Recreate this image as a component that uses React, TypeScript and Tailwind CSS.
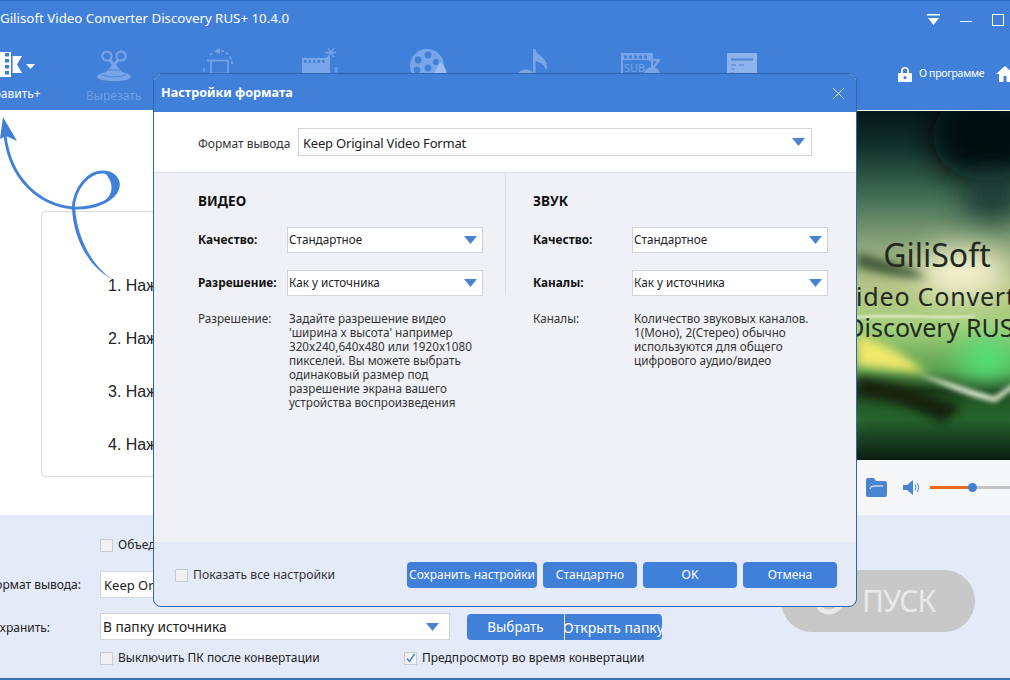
import React from "react";

const Caret = ({ className = "" }: { className?: string }) => (
  <svg width="13" height="8" viewBox="0 0 13 8" className={className}>
    <path d="M0 0H13L6.5 8Z" fill="#4a84d0" />
  </svg>
);

const Select = ({ text, className = "", textClass = "text-[11.7px] pl-[1px]" }: { text: string; className?: string; textClass?: string }) => (
  <div className={`flex items-center justify-between border border-[#d0d3d8] bg-white pr-[5px] ${className}`}>
    <span className={`whitespace-nowrap text-[#222] ${textClass}`}>{text}</span>
    <Caret />
  </div>
);

const Check = ({ checked = false }: { checked?: boolean }) => (
  <span className="flex h-[13px] w-[13px] shrink-0 items-center justify-center border border-[#c9cbd0] bg-[#f1f1f1]">
    {checked && (
      <svg width="11" height="11" viewBox="0 0 11 11">
        <path d="M2 5.5L4.5 8.5L9.5 1" stroke="#4a84d0" strokeWidth="1.5" fill="none" />
      </svg>
    )}
  </span>
);

const Tool = ({ label, children, dim = true }: { label?: string; children: React.ReactNode; dim?: boolean }) => (
  <div className="flex h-[55px] w-[104.5px] shrink-0 flex-col items-center">
    <div className="flex h-[38px] items-start justify-center">{children}</div>
    {label && <span className={`mt-[3px] whitespace-nowrap text-[12px] leading-[18px] ${dim ? "text-[#6f9fe4]" : "text-white"}`}>{label}</span>}
  </div>
);

const ic = "#78a5e8";
const bg = "#4080d9";

const Toolbar = () => (
  <div className="ml-[-43px] mt-[10px] flex">
    <Tool label="Добавить+" dim={false}>
      <svg width="62" height="34" viewBox="0 0 62 34">
        <rect x="8" y="4" width="25" height="25" fill="#fff" />
        <path d="M33 8H44L39 16.5L44 25H33Z" fill="#fff" />
        {[5, 11, 17, 23].map((y) => (
          <rect key={y} x="27" y={y} width="4" height="3.5" fill={bg} />
        ))}
        <rect x="33" y="8" width="1.6" height="17" fill={bg} />
        <path d="M48 16H57L52.5 21Z" fill="#fff" />
      </svg>
    </Tool>
    <Tool label="Вырезать">
      <svg width="36" height="36" viewBox="0 0 36 36">
        <circle cx="11" cy="8" r="4.6" fill="none" stroke={ic} strokeWidth="2" />
        <circle cx="25" cy="8" r="4.6" fill="none" stroke={ic} strokeWidth="2" />
        <path d="M14 12L23 24M22 12L13 24" stroke={ic} strokeWidth="3" />
        <path d="M18 15L26 24C31 25 35 27 35 29C33 32 27 33 18 33C9 33 3 32 1 29C1 27 5 25 10 24Z" fill={ic} />
        <path d="M6 27Q18 31 30 27" stroke={bg} strokeWidth="0.9" fill="none" />
        <path d="M12 22H24" stroke={bg} strokeWidth="1" />
      </svg>
    </Tool>
    <Tool>
      <svg width="34" height="28" viewBox="0 0 34 28">
        <rect x="10" y="12.5" width="17" height="13" fill="none" stroke={ic} strokeWidth="1.6" />
        <path d="M7 25.6H31M13 12.5H6" stroke={ic} strokeWidth="1.4" />
        <path d="M13 3L19 0V6Z" fill={ic} />
        <path d="M20 3H23M25 4.5L27 6.5M28.5 8.5L30 11M31 13V16" stroke={ic} strokeWidth="1.6" fill="none" />
        <path d="M3 20V24M9 7L11 5" stroke={ic} strokeWidth="1.4" />
      </svg>
    </Tool>
    <Tool>
      <svg width="40" height="28" viewBox="0 0 40 28" className="mr-[5px]">
        <path d="M2 10H25L30 8V28H2Z" fill={ic} />
        <g fill={bg}>
          {[4, 8.5, 13, 17.5, 22].map((x) => (
            <rect key={x} x={x} y="12" width="2.6" height="2.8" />
          ))}
        </g>
        <path d="M28 0L34 9M34 0L28 9M25 4.5H36" stroke={ic} strokeWidth="1.3" />
        <path d="M34 20L38 24M38 20L34 24M36 19V25" stroke={ic} strokeWidth="1" />
      </svg>
    </Tool>
    <Tool>
      <svg width="42" height="28" viewBox="0 0 42 28" className="ml-[2px]">
        <circle cx="20" cy="18" r="17" fill={ic} />
        <g fill={bg}>
          <circle cx="21" cy="7" r="3.4" />
          <circle cx="11" cy="12" r="3.4" />
          <circle cx="29" cy="14" r="3" />
          <circle cx="10" cy="22" r="3.4" />
          <circle cx="21" cy="20" r="3.4" />
        </g>
        <path d="M26 28L33 14C37 17 40 22 40 28Z" fill="#9dbeee" />
      </svg>
    </Tool>
    <Tool>
      <svg width="34" height="28" viewBox="0 0 34 28" className="ml-[2px]">
        <path d="M17 1H19.5V26H17Z" fill={ic} />
        <path d="M19 1C20 7 31 9 31 19C31 20 31 21 30 22C29 17 24 14 19 13Z" fill={ic} />
        <ellipse cx="10" cy="27" rx="8" ry="5.5" fill={ic} />
      </svg>
    </Tool>
    <Tool>
      <svg width="44" height="28" viewBox="0 0 44 28" className="ml-[4px]">
        <rect x="6" y="6" width="30" height="22" fill="none" stroke={ic} strokeWidth="2" />
        <rect x="6" y="6" width="30" height="6" fill={ic} />
        <g fill={bg}>
          {[8, 13, 18, 23, 28].map((x) => (
            <rect key={x} x={x} y="7.5" width="3" height="3" />
          ))}
        </g>
        <text x="8" y="24" fontSize="11" fill={ic} fontFamily="Noto Sans">SUB</text>
        <circle cx="36" cy="27" r="8" fill={ic} />
        <path d="M33 12H43L37 20" fill="none" stroke={ic} strokeWidth="2.4" />
      </svg>
    </Tool>
    <Tool>
      <svg width="36" height="28" viewBox="0 0 36 28" className="ml-[2px]">
        <rect x="3" y="5" width="30" height="23" fill="#8db2ec" />
        <path d="M7 11.5H29" stroke="#4f86d8" strokeWidth="2" />
        <path d="M7 17H12M15 17H20M7 21H11M7 25H10" stroke="#4f86d8" strokeWidth="1.2" />
      </svg>
    </Tool>
  </div>
);

const Header = () => (
  <header className="relative h-[110px] shrink-0 border-t border-[#2f69bd] bg-[#4080d9] text-white">
    <div className="flex h-[37px] items-center justify-between">
      <span className="mb-[1px] whitespace-nowrap text-[13.3px]">Gilisoft Video Converter Discovery RUS+ 10.4.0</span>
      <div className="mr-[6px] flex items-center gap-[20px]">
        <svg width="13" height="11" viewBox="0 0 13 11"><path d="M0 0H13V1.5H0ZM1 4H12L6.5 11Z" fill="#fff" /></svg>
        <span className="mt-[4px] h-[1.5px] w-[12px] bg-white" />
        <span className="h-[12px] w-[12px] border-[1.5px] border-white" />
      </div>
    </div>
    <Toolbar />
    <div className="absolute left-[898px] top-[65px] flex items-center whitespace-nowrap">
      <svg width="14" height="16" viewBox="0 0 14 16">
        <path d="M3 7V5C3 -0.5 11 -0.5 11 5V7H9.2V5C9.2 1.8 4.8 1.8 4.8 5V7Z" fill="#fff" />
        <path fillRule="evenodd" d="M1 7H13Q14 7 14 8V15Q14 16 13 16H1Q0 16 0 15V8Q0 7 1 7ZM7 10A1.6 1.6 0 1 0 7 13.2A1.6 1.6 0 1 0 7 10Z" fill="#fff" />
      </svg>
      <span className="ml-[7px] w-[70px] text-[10.5px] tracking-[-0.3px]">О программе</span>
      <svg width="18" height="16" viewBox="0 0 18 16" className="ml-[7px] shrink-0">
        <path d="M9 0L18 8H15V16H3V8H0Z" fill="#fff" />
        <rect x="7.5" y="10" width="3" height="6" fill="#4080d9" />
      </svg>
    </div>
  </header>
);

const Preview = () => (
  <div className="relative ml-[857px] mt-[1px] h-[349px] w-[160px] shrink-0 overflow-hidden bg-[#07140f]">
    <svg width="160" height="350" viewBox="0 0 160 350" className="absolute left-0 top-0">
      <defs>
        <linearGradient id="pg" x1="0" y1="0" x2="0" y2="1">
          <stop offset="0" stopColor="#07171a" />
          <stop offset="0.1" stopColor="#10302a" />
          <stop offset="0.24" stopColor="#3f6c52" />
          <stop offset="0.38" stopColor="#8aa47a" />
          <stop offset="0.5" stopColor="#b6c486" />
          <stop offset="0.62" stopColor="#a4d07c" />
          <stop offset="0.74" stopColor="#5aa050" />
          <stop offset="0.8" stopColor="#1d3d1c" />
          <stop offset="0.88" stopColor="#2e7a34" />
          <stop offset="1" stopColor="#0a1a12" />
        </linearGradient>
        <filter id="b1" x="-80%" y="-80%" width="260%" height="260%"><feGaussianBlur stdDeviation="14" /></filter>
        <filter id="b2" x="-50%" y="-100%" width="200%" height="300%"><feGaussianBlur stdDeviation="5" /></filter>
        <filter id="b4" x="-50%" y="-100%" width="200%" height="300%"><feGaussianBlur stdDeviation="2.5" /></filter>
        <filter id="b3" x="-20%" y="-500%" width="140%" height="1100%"><feGaussianBlur stdDeviation="1" /></filter>
      </defs>
      <rect width="160" height="350" fill="url(#pg)" />
      <ellipse cx="130" cy="25" rx="55" ry="45" fill="#04070b" filter="url(#b1)" />
      <ellipse cx="135" cy="85" rx="30" ry="25" fill="#1c3a34" filter="url(#b1)" />
      <ellipse cx="105" cy="162" rx="45" ry="24" fill="#f4f2d0" filter="url(#b1)" />
      <path d="M0 142L55 158L70 168L30 163L0 156Z" fill="#3a5434" filter="url(#b2)" />
      <ellipse cx="130" cy="248" rx="30" ry="20" fill="#50e67a" filter="url(#b1)" />
      <path d="M0 225C25 230 50 245 70 262L0 255Z" fill="#efe86a" filter="url(#b2)" />
      <path d="M0 266C35 270 70 282 105 296L85 312C60 298 30 288 0 284Z" fill="#12240f" filter="url(#b2)" />
      <path d="M0 300H160V350H0Z" fill="#0a1a12" opacity="0.25" filter="url(#b2)" />
      <path d="M60 262C88 270 115 279 137 286L160 270V275L138 291C110 285 85 274 60 262Z" fill="#eef9de" filter="url(#b4)" />
      <path d="M0 206C40 203 90 208 118 205" stroke="#f6fbe8" strokeWidth="1.6" fill="none" filter="url(#b3)" />
    </svg>
    <div className="relative flex h-full flex-col items-center whitespace-nowrap text-[#232a20]">
      <span className="mt-[124px] text-[32px] leading-[40px]">GiliSoft</span>
      <span className="ml-[8px] mt-[7px] text-[25px] leading-[28px] tracking-[0.8px]">Video Converter</span>
      <span className="mt-[3px] text-[25px] leading-[28px]">Discovery RUS+</span>
    </div>
  </div>
);

const Transport = () => (
  <div className="ml-[857px] flex h-[55px] shrink-0 items-center bg-[#f6f7f9] pl-[9px]">
    <svg width="21" height="19" viewBox="0 0 21 19">
      <path d="M0 2Q0 0 2 0H8L10 3H19Q21 3 21 5V17Q21 19 19 19H2Q0 19 0 17Z" fill="#4a84d0" />
      <path d="M4 11Q4 8 8 8H17" stroke="#fff" strokeWidth="1" fill="none" />
    </svg>
    <svg width="18" height="15" viewBox="0 0 18 15" className="ml-[16px]">
      <path d="M0 5H4L10 0V15L4 10H0Z" fill="#4a84d0" />
      <path d="M12 4.5Q14 7.5 12 10.5M14.5 3Q17 7.5 14.5 12" stroke="#4a84d0" strokeWidth="1" fill="none" />
    </svg>
    <div className="ml-[9px] flex flex-1 items-center">
      <div className="h-[3px] w-[42px] bg-[#e7691c]" />
      <div className="ml-[-4px] h-[9px] w-[9px] shrink-0 rounded-full bg-[#4080d9]" />
      <div className="h-[3px] flex-1 bg-[#c4c4c4]" />
    </div>
  </div>
);

const Steps = () => (
  <div className="ml-[41px] mt-[101px] flex h-[266px] w-[700px] flex-col gap-[33px] rounded-[4px] border border-[#dcdcdc] pl-[66px] pt-[64px] font-['Liberation_Sans',sans-serif] text-[16px] leading-[20px] text-[#222]">
    <span>1. Нажмите</span>
    <span>2. Нажмите</span>
    <span>3. Нажмите</span>
    <span>4. Нажмите</span>
  </div>
);

const Bottom = () => (
  <div className="flex-1 border-b-[2px] border-[#3a6fb8] bg-[#e4eaf7] text-[12px] text-[#222]">
    <div className="ml-[100px] mt-[23px] flex h-[14px] items-center gap-[5px]">
      <Check />
      <span className="whitespace-nowrap">Объединить в один файл</span>
    </div>
    <div className="mt-[19px] flex h-[27px] items-center">
      <div className="mt-[1px] flex w-[81px] shrink-0 justify-end whitespace-nowrap">Формат вывода:</div>
      <div className="ml-[19px] flex h-full w-[350px] items-center border border-[#d5d8de] bg-white pl-[3px] pt-[2px] text-[13px]">Keep Original</div>
    </div>
    <div className="mt-[15px] flex h-[27px] items-center">
      <div className="mt-[2px] flex w-[50px] shrink-0 justify-end whitespace-nowrap">Сохранить:</div>
      <Select text="В папку источника" className="ml-[50px] h-full w-[350px] pr-[10px]" textClass="text-[13.7px] pl-[2px] pt-[1px]" />
      <div className="ml-[17px] flex h-[26px] w-[97px] items-center justify-center rounded-l-[4px] bg-[#4080d9] pt-[1px] text-[13.5px] text-white">Выбрать</div>
      <div className="ml-[1px] flex h-[26px] w-[97px] items-center justify-center overflow-hidden whitespace-nowrap rounded-r-[4px] bg-[#4080d9] pt-[1px] text-[14px] text-white">Открыть папку</div>
    </div>
    <div className="ml-[100px] mt-[11px] flex h-[14px] items-center">
      <Check />
      <span className="ml-[5px] w-[286px] whitespace-nowrap">Выключить ПК после конвертации</span>
      <Check checked />
      <span className="ml-[5px] whitespace-nowrap">Предпросмотр во время конвертации</span>
    </div>
  </div>
);

const StartButton = () => (
  <div className="absolute left-[781px] top-[570px] flex h-[62px] w-[194px] items-center rounded-full bg-[#c8c8c8] pl-[33px] text-[#e9e9e9]">
    <svg width="30" height="30" viewBox="0 0 30 30">
      <path d="M3 13A12 12 0 0 0 27 15" stroke="#e9e9e9" strokeWidth="5" fill="none" />
      <path d="M26 15A11 11 0 0 0 6 9" stroke="#e9e9e9" strokeWidth="5" fill="none" />
    </svg>
    <span className="ml-[18px] text-[30px] leading-none tracking-[-1px]">ПУСК</span>
  </div>
);

const Row = ({ label, value, labelW }: { label: string; value: string; labelW: string }) => (
  <div className="flex h-[26px] items-center">
    <span className={`shrink-0 whitespace-nowrap text-[11.8px] font-bold text-[#111] ${labelW}`}>{label}</span>
    <Select text={value} className="h-full w-[196px]" />
  </div>
);

const Column = ({ title, rows, label, desc, className = "", labelW, descW }: { title: string; rows: [string, string][]; label: string; desc: string[]; className?: string; labelW: string; descW: string }) => (
  <div className={`flex flex-col ${className}`}>
    <div className="mt-[20px] h-[16px] text-[13.5px] font-bold leading-[16px] text-[#111]">{title}</div>
    <div className="mt-[18px] flex flex-col gap-[17px]">
      {rows.map(([a, b]) => (
        <Row key={a} label={a} value={b} labelW={labelW} />
      ))}
    </div>
    <div className="mt-[15px] flex text-[11.7px] leading-[14px] text-[#333]">
      <span className={`shrink-0 ${descW}`}>{label}</span>
      <div className="whitespace-nowrap">
        {desc.map((l) => (
          <div key={l}>{l}</div>
        ))}
      </div>
    </div>
  </div>
);

const Btn = ({ children, w }: { children: React.ReactNode; w: string }) => (
  <div className={`flex h-[26px] items-center justify-center whitespace-nowrap rounded-[4px] bg-[#4080d9] text-[12px] text-white ${w}`}>{children}</div>
);

const Modal = () => (
  <div className="absolute left-[153px] top-[73px] flex h-[534px] w-[704px] flex-col overflow-hidden rounded-[8px] border border-[#2f66ad] bg-[#e4eaf7]">
    <div className="flex h-[38px] shrink-0 items-center justify-between bg-[#4080d9] pl-[7px] pr-[11px] text-white">
      <span className="text-[12.6px] font-bold">Настройки формата</span>
      <svg width="13" height="13" viewBox="0 0 13 13"><path d="M1 1L12 12M12 1L1 12" stroke="#fff" strokeWidth="0.9" /></svg>
    </div>
    <div className="flex h-[61px] shrink-0 items-center border-b border-[#dcdfe4] bg-white pl-[44px]">
      <span className="mt-[3px] w-[100px] whitespace-nowrap text-[12px] text-[#333]">Формат вывода</span>
      <Select text="Keep Original Video Format" className="h-[28px] w-[514px] pr-[6px]" textClass="text-[13px] tracking-[-0.2px] pl-[4px] pt-[3px]" />
    </div>
    <div className="flex h-[369px] shrink-0 bg-[#eff1f6]">
      <Column className="ml-[44px] h-[122px] w-[308px] self-start border-r border-[#dcdfe4]" labelW="w-[89px]" descW="w-[91px]" title="ВИДЕО" label="Разрешение:" rows={[["Качество:", "Стандартное"], ["Разрешение:", "Как у источника"]]} desc={["Задайте разрешение видео", "'ширина x высота' например", "320x240,640x480 или 1920x1080", "пикселей. Вы можете выбрать", "одинаковый размер под", "разрешение экрана вашего", "устройства воспроизведения"]} />
      <Column className="ml-[27px]" labelW="w-[99px]" descW="w-[101px]" title="ЗВУК" label="Каналы:" rows={[["Качество:", "Стандартное"], ["Каналы:", "Как у источника"]]} desc={["Количество звуковых каналов.", "1(Моно), 2(Стерео) обычно", "используются для общего", "цифрового аудио/видео"]} />
    </div>
    <div className="flex flex-1 items-center pl-[21px] pt-[2px]">
      <Check />
      <span className="ml-[5px] w-[214px] whitespace-nowrap text-[12.2px] text-[#333]">Показать все настройки</span>
      <div className="flex gap-[6px]">
        <Btn w="w-[130px]">Сохранить настройки</Btn>
        <Btn w="w-[94px]">Стандартно</Btn>
        <Btn w="w-[94px]">OK</Btn>
        <Btn w="w-[94px]">Отмена</Btn>
      </div>
    </div>
  </div>
);

const Swirl = () => (
  <svg width="130" height="180" viewBox="0 0 130 180" className="absolute left-0 top-[110px]">
    <path d="M112 169C90 158 73 130 72 97L75 97C77 128 92 156 112 169Z" fill="#4080d9" />
    <path d="M73 100C74 76 90 62 102 62C114 62 120 70 118 78C115 90 95 99 73 98C40 95 10 70 5 25" stroke="#4080d9" strokeWidth="2.8" fill="none" />
    <path d="M104 62C116 64 120 72 117 80C113 86 108 90 104 91C112 86 116 74 104 62Z" fill="#4080d9" />
    <path d="M3 7L17 31L6 26L0 29Z" fill="#4080d9" />
  </svg>
);

export default function App() {
  return (
    <div className="relative flex h-[680px] w-[1010px] flex-col overflow-hidden bg-white font-['Noto_Sans',sans-serif]">
      <Header />
      <div className="relative h-[405px] shrink-0 overflow-hidden">
        <div className="absolute inset-0">
          <Steps />
        </div>
        <div className="relative flex h-full flex-col">
          <Preview />
          <Transport />
        </div>
      </div>
      <Bottom />
      <Swirl />
      <StartButton />
      <Modal />
    </div>
  );
}
